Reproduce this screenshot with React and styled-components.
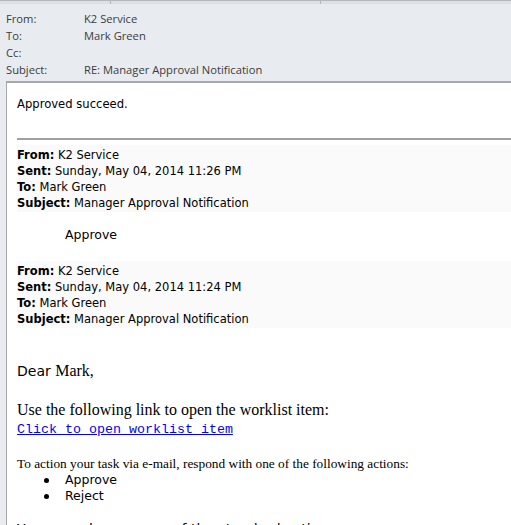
import React from "react";
import styled, { createGlobalStyle } from "styled-components";

const GlobalStyle = createGlobalStyle`
  html, body {
    margin: 0;
    padding: 0;
    background: #e8ebf0;
    overflow: hidden;
  }
`;

const Window = styled.div`
  width: 511px;
  height: 525px;
  overflow: hidden;
  display: flex;
  flex-direction: column;
  background: #e8ebf0;
`;

const TopStrip = styled.div`
  height: 3px;
  border-top: 1px solid #b4b7bc;
  background: #dde0e5;
  display: flex;
  flex: none;
`;

const Tick = styled.span`
  width: ${(p) => p.$w}px;
  border-right: 1px solid #b4b7bc;
  flex: none;
`;

const Header = styled.div`
  padding: 6px 0 3px 6px;
  flex: none;
`;

const HeaderRow = styled.div`
  display: grid;
  grid-template-columns: 78px 1fr;
  font-family: "Open Sans", "Noto Sans", sans-serif;
  font-size: 11.2px;
  line-height: 17px;
  height: 17px;
  color: #3c3c3c;
`;

const Body = styled.div`
  flex: 1;
  margin-left: 6px;
  background: #ffffff;
  border-top: 2px solid #a6a8ab;
  border-left: 1px solid #a6a8ab;
  padding: 13px 0 0 10px;
  font-family: Tahoma, "DejaVu Sans", sans-serif;
  color: #000;
`;

const Plain = styled.div`
  font-size: ${(p) => p.$size || 11.6}px;
  line-height: 16px;
  margin-top: ${(p) => p.$mt || 0}px;
`;

const Rule = styled.hr`
  margin: 26px 0 5px 0;
  border: none;
  border-top: 2px solid #a0a0a0;
`;

const Block = styled.div`
  background: #fafafb;
  padding: 2px 0 1px 0;
  font-size: 11.5px;
  line-height: 16px;
`;

const Label = styled.b`
  font-weight: bold;
`;

const Indented = styled.div`
  font-size: 12.5px;
  line-height: 16px;
  padding-left: 48px;
  margin: 15px 0 18px 0;
`;

const Dear = styled.div`
  margin-top: 34px;
  font-size: 14px;
  line-height: 18px;
  span {
    font-family: "Liberation Serif", "Times New Roman", serif;
    font-size: 16px;
  }
`;

const Serif = styled.div`
  font-family: "Liberation Serif", "Times New Roman", serif;
  font-size: ${(p) => p.$size}px;
  line-height: ${(p) => p.$lh}px;
  margin-top: ${(p) => p.$mt || 0}px;
`;

const Link = styled.a`
  display: block;
  font-family: "Liberation Mono", "Courier New", monospace;
  font-size: 13.33px;
  line-height: 21px;
  color: #0000ff;
  text-decoration: underline;
`;

const Actions = styled.ul`
  margin: 0;
  padding-left: 48px;
  font-size: 12.5px;
  line-height: 16px;
  list-style: none;
  li {
    position: relative;
  }
  li::before {
    content: "";
    position: absolute;
    left: -21px;
    top: 6px;
    width: 5px;
    height: 5px;
    border-radius: 50%;
    background: #000;
  }
`;

const headerFields = [
  ["From:", "K2 Service"],
  ["To:", "Mark Green"],
  ["Cc:", ""],
  ["Subject:", "RE: Manager Approval Notification"],
];

function MessageHeader({ sent }) {
  return (
    <Block>
      <div>
        <Label>From:</Label> K2 Service
      </div>
      <div>
        <Label>Sent:</Label> {sent}
      </div>
      <div>
        <Label>To:</Label> Mark Green
      </div>
      <div>
        <Label>Subject:</Label> Manager Approval Notification
      </div>
    </Block>
  );
}

export default function App() {
  return (
    <Window>
      <GlobalStyle />
      <TopStrip>
        <Tick $w={110} />
        <Tick $w={209} />
      </TopStrip>
      <Header>
        {headerFields.map(([k, v]) => (
          <HeaderRow key={k}>
            <span>{k}</span>
            <span>{v}</span>
          </HeaderRow>
        ))}
      </Header>
      <Body>
        <Plain>Approved succeed.</Plain>
        <Rule />
        <MessageHeader sent="Sunday, May 04, 2014 11:26 PM" />
        <Indented>Approve</Indented>
        <MessageHeader sent="Sunday, May 04, 2014 11:24 PM" />
        <Dear>
          Dear <span>Mark,</span>
        </Dear>
        <Serif $size={16} $lh={18} $mt={21}>
          Use the following link to open the worklist item:
        </Serif>
        <Link href="#">Click to open worklist item</Link>
        <Serif $size={13.33} $lh={17} $mt={15}>
          To action your task via e-mail, respond with one of the following
          actions:
        </Serif>
        <Actions>
          <li>Approve</li>
          <li>Reject</li>
        </Actions>
        <Plain $mt={17} $size={14}>
          You may also use one of the standard actions:
        </Plain>
      </Body>
    </Window>
  );
}
